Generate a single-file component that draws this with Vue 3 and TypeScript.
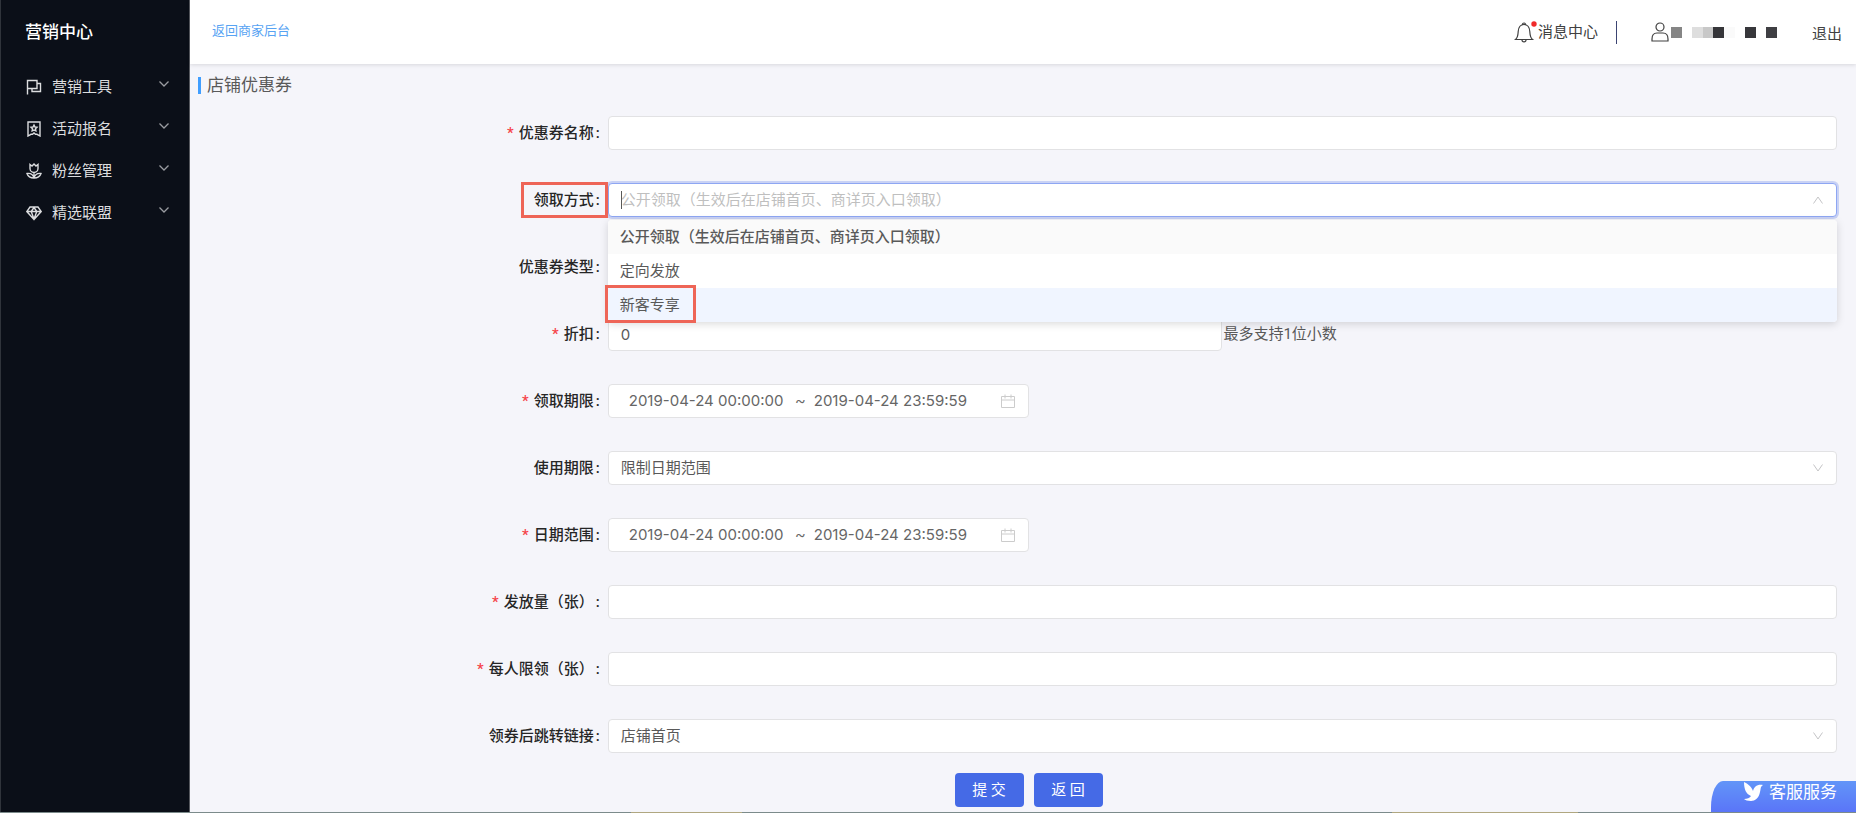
<script setup lang="ts">
import { ref } from 'vue'

interface MenuItem {
  label: string
  icon: 'flag' | 'badge' | 'flower' | 'gem'
}

const menu: MenuItem[] = [
  { label: '营销工具', icon: 'flag' },
  { label: '活动报名', icon: 'badge' },
  { label: '粉丝管理', icon: 'flower' },
  { label: '精选联盟', icon: 'gem' },
]

const mask: string[] = [
  '#858585',
  '#ffffff',
  '#dedede',
  '#c8c8c8',
  '#353539',
  '#fafafa',
  '#ffffff',
  '#37373b',
  '#ffffff',
  '#3f3f43',
]

const methods: string[] = ['公开领取（生效后在店铺首页、商详页入口领取）', '定向发放', '新客专享']
const name = ref('')
const method = ref('')
const discount = ref('0')
const type = ref('折扣券')
const claimPeriod = ref({ start: '2019-04-24 00:00:00', end: '2019-04-24 23:59:59' })
const usePeriod = ref('限制日期范围')
const dateRange = ref({ start: '2019-04-24 00:00:00', end: '2019-04-24 23:59:59' })
const amount = ref('')
const limit = ref('')
const target = ref('店铺首页')
</script>

<template>
  <div class="app">
    <aside class="sidebar">
      <h1 class="brand">营销中心</h1>
      <nav>
        <button v-for="item in menu" :key="item.label" type="button" class="menu-item">
          <svg class="menu-icon" viewBox="0 0 16 16" aria-hidden="true">
            <path v-if="item.icon === 'flag'" d="M1.500 15.500V1.500H11v8H1.500M11 4.500h3.500v8H6v-3" />
            <g v-else-if="item.icon === 'badge'">
              <path d="M2 1h12v14l-3-1.700H9.500L8 12l-1.500 1.300H5L2 15z" />
              <path d="M8 4l1 2 2 .3-1.500 1.500.4 2.100L8 9l-1.900.9.4-2.100L5 6.300 7 6z" />
            </g>
            <path v-else-if="item.icon === 'flower'" d="M4 1.500 6 3l2-2 2 2 2-1.500v4a4 4 0 0 1-8 0zM8 9.500V15M8 15c-3.500 0-6-1.500-7-4.500 3.500-.5 6 1 7 4.500zM8 15c3.500 0 6-1.500 7-4.500-3.500-.5-6 1-7 4.500z" />
            <path v-else d="M4 2h8l3.200 4.500L8 14.500.8 6.500zM1 6.500h14M5.200 6.500 8 14l2.800-7.500M5.200 6.500 8 2.500l2.800 4" />
          </svg>
          <span>{{ item.label }}</span>
          <svg class="menu-arrow" viewBox="0 0 10 6" aria-hidden="true"><path d="M.5.5 5 5 9.500.5" /></svg>
        </button>
      </nav>
    </aside>

    <div class="page">
      <header class="topbar">
        <a class="back" href="#">返回商家后台</a>
        <div class="account">
          <a class="messages" href="#">
            <svg class="bell" viewBox="0 0 24 22" aria-hidden="true">
              <path d="M1.500 18.500C4 16.500 4 14 4.200 10.500 4.500 6.500 6.500 3.500 10 3.500s5.500 3 5.800 7c.2 3.500.2 6 2.700 8zM8 19a2 1.800 0 0 0 4 0M8.500 3.500a1.500 1.500 0 0 1 3 0" />
              <circle class="dot" cx="20" cy="3" r="2.700" />
            </svg>
            <span>消息中心</span>
          </a>
          <span class="divider"></span>
          <span class="user">
            <svg class="person" viewBox="0 0 18 20" aria-hidden="true">
              <circle cx="9" cy="5" r="4" />
              <path d="M1 19v-2c0-4 2-6 5-6h6c3 0 5 2 5 6v2z" />
            </svg>
            <span class="mask">
              <span v-for="(colour, i) in mask" :key="i" class="block" :style="{ background: colour }"></span>
            </span>
          </span>
          <a class="logout" href="#">退出</a>
        </div>
      </header>

      <main>
        <h2 class="title">店铺优惠券</h2>
        <form class="form" @submit.prevent>
          <div class="row">
            <label class="label required" for="name">优惠券名称</label>
            <input id="name" v-model="name" class="control" type="text" />
          </div>

          <div class="row">
            <label class="label" for="method">领取方式</label>
            <div class="field">
              <input id="method" v-model="method" class="control open" type="text" role="combobox" aria-expanded="true" aria-controls="methods" :placeholder="methods[0]" />
              <span class="caret"></span>
              <svg class="arrow" viewBox="0 0 12 8" aria-hidden="true"><path d="M1.500 7.500 6 1l4.500 6.500" /></svg>
              <ul id="methods" class="dropdown" role="listbox">
                <li v-for="(option, i) in methods" :key="option" role="option" :aria-selected="i === 0" :class="{ selected: i === 0, active: i === 2 }">{{ option }}</li>
              </ul>
              <span class="mark mark-label"></span>
              <span class="mark mark-option"></span>
            </div>
          </div>

          <div class="row">
            <label class="label" for="type">优惠券类型</label>
            <select id="type" v-model="type" class="control"><option>折扣券</option></select>
          </div>

          <div class="row">
            <label class="label required" for="discount">折扣</label>
            <div class="field split">
              <input id="discount" v-model="discount" class="control half" type="text" />
              <span class="hint">最多支持1位小数</span>
            </div>
          </div>

          <div class="row">
            <label class="label required" for="claim">领取期限</label>
            <div class="control range">
              <input id="claim" v-model="claimPeriod.start" type="text" />
              <span class="tilde">~</span>
              <input v-model="claimPeriod.end" type="text" aria-label="领取期限结束" />
              <svg class="calendar" viewBox="0 0 14 14" aria-hidden="true"><path d="M.5 2.500h13v11H.5zM.5 6h13M4 .500v4M10 .500v4" /></svg>
            </div>
          </div>

          <div class="row">
            <label class="label" for="use">使用期限</label>
            <div class="field">
              <select id="use" v-model="usePeriod" class="control"><option>限制日期范围</option></select>
              <svg class="arrow" viewBox="0 0 12 8" aria-hidden="true"><path d="M1.500.5 6 7 10.500.5" /></svg>
            </div>
          </div>

          <div class="row">
            <label class="label required" for="range">日期范围</label>
            <div class="control range">
              <input id="range" v-model="dateRange.start" type="text" />
              <span class="tilde">~</span>
              <input v-model="dateRange.end" type="text" aria-label="日期范围结束" />
              <svg class="calendar" viewBox="0 0 14 14" aria-hidden="true"><path d="M.5 2.500h13v11H.5zM.5 6h13M4 .500v4M10 .500v4" /></svg>
            </div>
          </div>

          <div class="row">
            <label class="label required" for="amount">发放量（张）</label>
            <input id="amount" v-model="amount" class="control" type="text" />
          </div>

          <div class="row">
            <label class="label required" for="limit">每人限领（张）</label>
            <input id="limit" v-model="limit" class="control" type="text" />
          </div>

          <div class="row last">
            <label class="label" for="target">领券后跳转链接</label>
            <div class="field">
              <select id="target" v-model="target" class="control"><option>店铺首页</option></select>
              <svg class="arrow" viewBox="0 0 12 8" aria-hidden="true"><path d="M1.500.5 6 7 10.500.5" /></svg>
            </div>
          </div>

          <div class="actions">
            <button type="submit">提 交</button>
            <button type="button">返 回</button>
          </div>
        </form>
      </main>
    </div>

    <div class="edge"></div>
    <button type="button" class="service">
      <svg viewBox="0 0 20 20" aria-hidden="true">
        <path d="M1 0c4 2 7 4 9 9 1-4 4-7 10-6-3 2-2 4-3 7-1 6-5 9-9 9-3 0-6-1-7-2 3 0 6-1 7-3C3 12 1 7 1 0z" />
      </svg>
      <span>客服服务</span>
    </button>
  </div>
</template>

<style>
body {
  margin: 0;
  background: #f5f5fa;
}
</style>

<style scoped>
* {
  box-sizing: border-box;
}

.app {
  display: flex;
  min-height: 100vh;
  position: relative;
  overflow: hidden;
  font-family: Roboto, "Noto Sans CJK SC", sans-serif;
  font-size: 15px;
  line-height: 22px;
  color: #595959;
}

input,
select,
button {
  font: inherit;
  color: inherit;
}

a {
  color: inherit;
  text-decoration: none;
}

svg {
  fill: none;
  stroke: currentColor;
  flex: none;
}

.sidebar {
  flex: none;
  width: 190px;
  background: #0b0f18;
  border-left: 1px solid #30343b;
  border-right: 1px solid #56585e;
  color: #dcdddf;
}

.brand {
  margin: 0;
  height: 66px;
  padding: 0 24px;
  font-size: 17px;
  line-height: 64px;
  font-weight: 500;
  color: #fff;
}

.menu-item {
  display: flex;
  align-items: center;
  width: 100%;
  height: 42px;
  padding: 0 20px 0 25px;
  border: 0;
  background: none;
  text-align: left;
}

.menu-icon {
  width: 16px;
  height: 16px;
  margin-right: 10px;
  stroke-width: 1.4;
}

.menu-arrow {
  width: 10px;
  height: 6px;
  margin: 0 0 6px auto;
  color: #9a9ca1;
  stroke-width: 1.3;
}

.page {
  flex: 1;
  min-width: 0;
}

.topbar {
  display: flex;
  align-items: center;
  justify-content: space-between;
  height: 64px;
  padding: 0 14px 0 22px;
  background: #fff;
  box-shadow: 0 1px 4px rgba(0, 0, 0, 0.12);
}

.back {
  font-size: 13px;
  color: #57a3f3;
  padding-bottom: 3px;
}

.account,
.messages,
.user {
  display: flex;
  align-items: center;
}

.account {
  color: #404040;
}

.bell {
  width: 24px;
  height: 22px;
  stroke-width: 1.2;
}

.dot {
  fill: #f02a2a;
  stroke: none;
}

.divider {
  width: 1px;
  height: 23px;
  margin: 0 34px 0 18px;
  background: #3b4472;
}

.person {
  width: 18px;
  height: 20px;
  margin-right: 2px;
  stroke-width: 1.2;
}

.mask {
  display: flex;
  width: 106px;
}

.block {
  flex: 1;
  height: 11px;
}

.logout {
  margin-left: 35px;
  padding-top: 3px;
}

.title {
  display: flex;
  align-items: center;
  gap: 6px;
  height: 42px;
  margin: 0;
  padding-left: 8px;
  font-size: 17px;
  font-weight: 400;
}

.title::before {
  content: "";
  width: 3px;
  height: 17px;
  background: #409eff;
}

.form {
  padding: 10px 19px 0 8px;
}

.row {
  display: grid;
  grid-template-columns: 25fr 75fr;
  height: 67px;
}

.row.last {
  height: 57px;
}

.label {
  padding-right: 8px;
  line-height: 34px;
  text-align: right;
  font-weight: 500;
  color: #262626;
}

.label::after {
  content: ":";
  margin-left: 2px;
}

.required::before {
  content: "*";
  margin-right: 5px;
  color: #f5444a;
}

.control {
  width: 100%;
  height: 34px;
  padding: 0 12px;
  border: 1px solid #e2e2e4;
  border-radius: 4px;
  background: #fff;
  appearance: none;
  outline: 0;
}

.field {
  position: relative;
}

.open {
  border-color: #8ea6f3;
  box-shadow: 0 0 0 2px rgba(70, 106, 230, 0.25);
}

.open::placeholder {
  color: #bfbfbf;
}

.caret {
  position: absolute;
  left: 13px;
  top: 8px;
  width: 1px;
  height: 18px;
  background: #595959;
}

.arrow {
  position: absolute;
  right: 13px;
  top: 13px;
  width: 12px;
  height: 8px;
  color: #c4c4c6;
}

.dropdown {
  position: absolute;
  z-index: 2;
  top: 37px;
  left: 0;
  right: 0;
  margin: 0;
  padding: 0;
  list-style: none;
  border-radius: 4px;
  overflow: hidden;
  background: #fff;
  box-shadow: 0 2px 8px rgba(0, 0, 0, 0.15);
}

.dropdown li {
  padding: 0 12px;
  height: 34px;
  line-height: 34px;
}

.dropdown .selected {
  background: #fafafa;
  font-weight: 500;
}

.dropdown .active {
  background: #f0f5ff;
}

.mark {
  position: absolute;
  z-index: 3;
  border: 3px solid #ee6557;
}

.mark-label {
  right: 100%;
  top: -1px;
  width: 87px;
  height: 36px;
}

.mark-option {
  left: -3px;
  top: 102px;
  width: 91px;
  height: 38px;
}

.split {
  display: flex;
  align-items: flex-start;
  gap: 1px;
}

.half {
  width: 50%;
  font-family: Inter, sans-serif;
}

.hint {
  line-height: 34px;
}

.range {
  display: flex;
  align-items: center;
  width: 421px;
  padding: 0 13px 0 20px;
  color: #666;
}

.range input {
  width: 158px;
  padding: 0;
  border: 0;
  outline: 0;
  background: none;
  font-family: Inter, sans-serif;
}

.tilde {
  width: 27px;
  text-align: center;
}

.calendar {
  width: 14px;
  height: 14px;
  margin-left: auto;
  color: #ccc;
}

.actions {
  display: flex;
  gap: 10px;
  margin-top: -3px;
  padding-left: calc(50% - 63px);
}

.actions button {
  width: 69px;
  height: 34px;
  padding: 0;
  border: 0;
  border-radius: 4px;
  background: #456ae6;
  color: #fff;
}

.edge {
  position: absolute;
  left: 0;
  right: 0;
  bottom: 0;
  height: 1px;
  background: linear-gradient(to right, #7c8b8b 0 34%, #b0a780 34% 40%, #7c8b8b 40% 75%, #b0a780 75% 85%, #7c8b8b 85%);
}

.service {
  position: absolute;
  right: 0;
  bottom: 1px;
  display: flex;
  align-items: center;
  gap: 6px;
  height: 31px;
  padding: 0 19px 10px 32px;
  border: 0;
  border-radius: 12px 0 0 0 / 26px 0 0 0;
  background: linear-gradient(#6295f8, #5a75f8);
  color: #fff;
  font-size: 17px;
}

.service svg {
  width: 20px;
  height: 20px;
  fill: #fff;
  stroke: none;
}
</style>
